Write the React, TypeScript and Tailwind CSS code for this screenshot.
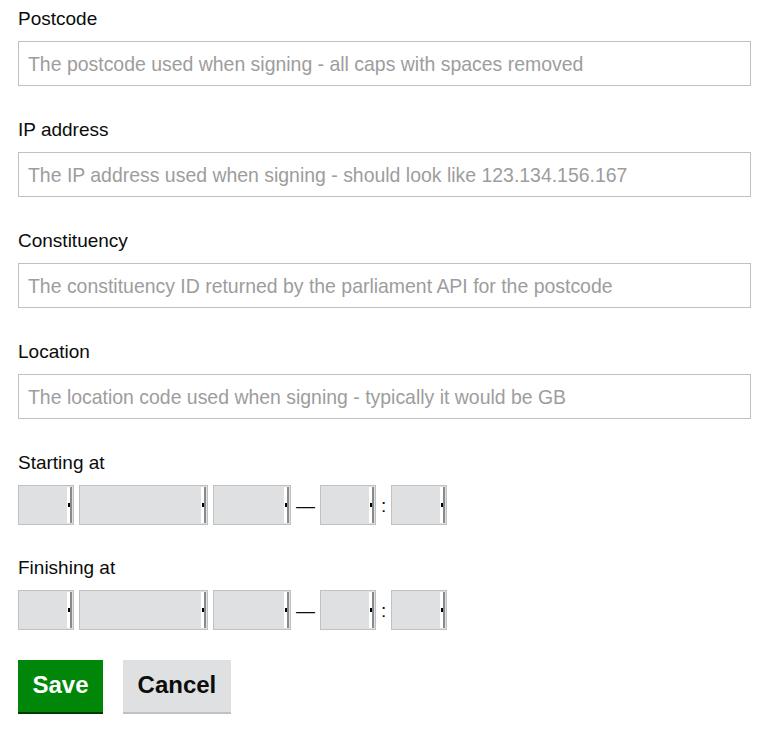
const fields = [
  { label: 'Postcode', placeholder: 'The postcode used when signing - all caps with spaces removed' },
  { label: 'IP address', placeholder: 'The IP address used when signing - should look like 123.134.156.167' },
  { label: 'Constituency', placeholder: 'The constituency ID returned by the parliament API for the postcode' },
  { label: 'Location', placeholder: 'The location code used when signing - typically it would be GB' },
];

function FakeSelect({ width }: { width: string }) {
  return (
    <div className={`${width} h-[40px] border border-[#bfc1c3] bg-[#dee0e2] flex justify-end py-px pr-px`}>
      <div className="w-[3px] bg-white flex items-center justify-center">
        <div className="w-[2px] h-[4px] bg-black" />
      </div>
      <div className="w-[2px] bg-[#8a8a8a]" />
    </div>
  );
}

function DateTimeRow() {
  return (
    <div className="flex items-center gap-[5px] text-[19px] text-[#0b0c0c]">
      <FakeSelect width="w-[56px]" />
      <FakeSelect width="w-[129px]" />
      <FakeSelect width="w-[78px]" />
      <span className="leading-none">—</span>
      <FakeSelect width="w-[56px]" />
      <span className="leading-none">:</span>
      <FakeSelect width="w-[56px]" />
    </div>
  );
}

export default function App() {
  return (
    <div className="bg-white min-h-[744px] px-[18px] pt-[6px] font-['Liberation_Sans',Arial,sans-serif] text-[#0b0c0c]">
      {fields.map((f) => (
        <div key={f.label} className="mb-[31px]">
          <label className="block text-[19px] leading-[25px] mb-[10px]">{f.label}</label>
          <input
            type="text"
            placeholder={f.placeholder}
            className="block w-[733px] h-[45px] border border-[#bfc1c3] px-[9px] pt-[1px] text-[19.45px] placeholder:text-[#9d9d9d] outline-none"
          />
        </div>
      ))}

      <div className="mb-[30px]">
        <div className="text-[19px] leading-[25px] mb-[10px]">Starting at</div>
        <DateTimeRow />
      </div>

      <div className="mb-[30px]">
        <div className="text-[19px] leading-[25px] mb-[10px]">Finishing at</div>
        <DateTimeRow />
      </div>

      <div className="flex gap-[20px]">
        <button className="h-[52px] px-[14.5px] bg-[#00870a] text-white font-bold text-[24px] leading-none shadow-[0_2px_0_#003a00] mb-[2px] pb-[2px]">
          Save
        </button>
        <button className="h-[52px] px-[14.5px] bg-[#dee0e2] text-[#0b0c0c] font-bold text-[24px] leading-none shadow-[0_2px_0_#bfc1c3] pb-[2px]">
          Cancel
        </button>
      </div>
    </div>
  );
}
